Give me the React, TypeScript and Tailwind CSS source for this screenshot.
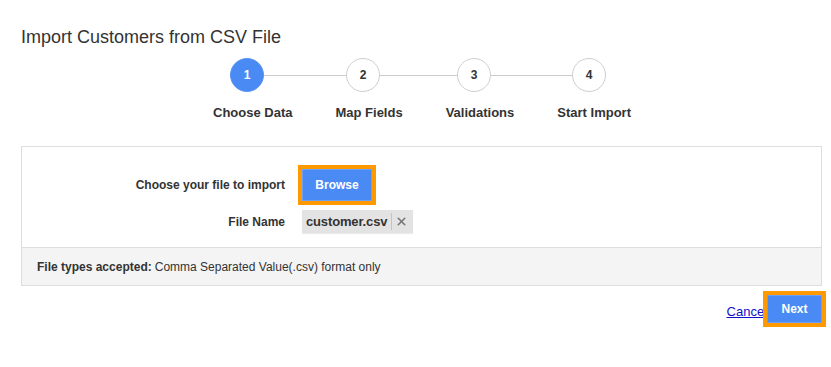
import { X } from 'lucide-react'

const steps = [
  { n: 1, label: 'Choose Data', active: true },
  { n: 2, label: 'Map Fields', active: false },
  { n: 3, label: 'Validations', active: false },
  { n: 4, label: 'Start Import', active: false },
]

function StepCircle({ n, active }: { n: number; active: boolean }) {
  return (
    <div
      className={`w-[34px] h-[34px] rounded-full flex items-center justify-center text-[12px] font-bold shrink-0 ${
        active ? 'bg-[#4a8af4] text-white border border-[#5b95f5]' : 'bg-white text-[#333] border border-[#cfcfcf]'
      }`}
    >
      {n}
    </div>
  )
}

export default function App() {
  return (
    <div className="w-[831px] h-[367px] bg-white text-[#333] font-['Liberation_Sans',Arial,sans-serif] relative overflow-hidden">
      {/* Title */}
      <h1 className="pt-[27px] pl-[21px] text-[18px] leading-[21px] text-[#333]">
        Import Customers from CSV File
      </h1>

      {/* Stepper */}
      <div className="flex items-center ml-[230px] mt-[10px]">
        <StepCircle n={1} active />
        <div className="w-[82px] h-px bg-[#cccccc]"></div>
        <StepCircle n={2} active={false} />
        <div className="w-[77px] h-px bg-[#cccccc]"></div>
        <StepCircle n={3} active={false} />
        <div className="w-[81px] h-px bg-[#cccccc]"></div>
        <StepCircle n={4} active={false} />
      </div>
      <div className="flex ml-[213px] mt-[13px] gap-[43px] text-[13px] font-bold leading-[16px]">
        {steps.map((s) => (
          <span key={s.n}>{s.label}</span>
        ))}
      </div>

      {/* Panel */}
      <div className="mx-[21px] mt-[25px] w-[801px] border border-[#dddddd]">
        <div className="pt-[18px] pb-[14px]">
          <div className="flex items-center">
            <div className="w-[263px] text-right text-[12px] font-bold">Choose your file to import</div>
            <div className="ml-[13px] border-4 border-[#ff9900]">
              <button className="w-[70px] h-[32px] bg-[#4a8af4] border border-[#6fa0f7] text-white text-[12px] font-bold">
                Browse
              </button>
            </div>
          </div>
          <div className="flex items-center mt-[5px]">
            <div className="w-[263px] text-right text-[12px] font-bold">File Name</div>
            <div className="ml-[17px] h-[23px] bg-[#e3e3e3] flex items-center shadow-[0_1px_1px_rgba(0,0,0,0.08)]">
              <span className="pl-[4px] pr-[4px] text-[13px] font-bold text-[#333] tracking-[-0.15px]">customer.csv</span>
              <span className="w-px h-[17px] bg-[#c4c4c4]"></span>
              <span className="pl-[3px] pr-[5px] flex items-center text-[#777]">
                <X size={13} strokeWidth={3} />
              </span>
            </div>
          </div>
        </div>
        <div className="bg-[#f4f4f4] border-t border-[#dddddd] h-[38px] flex items-center pl-[15px] text-[12px]">
          <span className="font-bold">File types accepted:</span>
          <span className="ml-[3px]">Comma Separated Value(.csv) format only</span>
        </div>
      </div>

      {/* Actions */}
      <div className="flex justify-end items-center mt-[5px] mr-[5px]">
        <a href="#" className="text-[13px] text-[#1010c8] underline mt-[5px] -mr-[4px]">
          Cancel
        </a>
        <div className="relative border-4 border-[#ff9900] bg-white">
          <button className="w-[55px] h-[28px] bg-[#4a8af4] border border-[#6fa0f7] text-white text-[12px] font-bold">
            Next
          </button>
        </div>
      </div>
    </div>
  )
}
